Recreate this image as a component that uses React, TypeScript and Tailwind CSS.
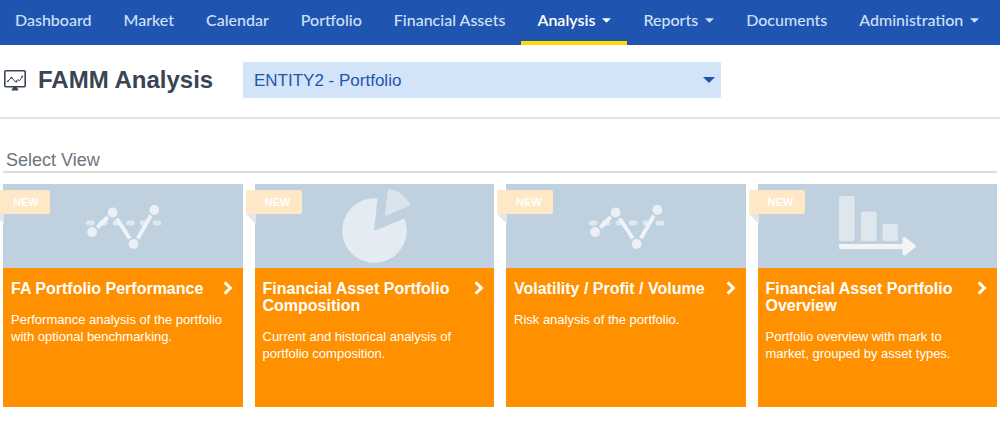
import React, { JSX } from "react";

type NavItem = {
  id: number;
  text: string;
  hasMenu?: boolean;
  active?: boolean;
};

type ViewItem = {
  id: number;
  title: string;
  description: string;
  icon: () => JSX.Element;
};

const navList: NavItem[] = [
  { id: 1, text: "Dashboard" },
  { id: 2, text: "Market" },
  { id: 3, text: "Calendar" },
  { id: 4, text: "Portfolio" },
  { id: 5, text: "Financial Assets" },
  { id: 6, text: "Analysis", hasMenu: true, active: true },
  { id: 7, text: "Reports", hasMenu: true },
  { id: 8, text: "Documents" },
  { id: 9, text: "Administration", hasMenu: true },
];

const CaretIcon = ({ className }: { className: string }) => (
  <svg viewBox="0 0 10 5" className={className} aria-hidden="true">
    <path d="M0 0h10L5 5z" fill="currentColor" />
  </svg>
);

const ChevronIcon = () => (
  <svg
    viewBox="0 0 10 14"
    className="mt-px h-3.5 w-2.5 shrink-0"
    fill="none"
    stroke="currentColor"
    strokeWidth="3"
    aria-hidden="true"
  >
    <path d="M1.6 1.4 7.4 7l-5.8 5.6" />
  </svg>
);

const MonitorIcon = () => (
  <svg
    viewBox="0 0 22 21"
    className="h-[21px] w-[22px] shrink-0"
    fill="none"
    stroke="currentColor"
    aria-hidden="true"
  >
    <rect x="0.8" y="0.8" width="20.4" height="16" rx="1" strokeWidth="1.6" />
    <path d="M3.5 11.5 7.5 7.5l4 4.5 2.4-2.4 1.6 1.2 3-4.6" strokeWidth="1" />
    <g fill="currentColor" stroke="none">
      <circle cx="3.8" cy="11.3" r="0.9" />
      <circle cx="7.5" cy="7.7" r="1" />
      <circle cx="12.4" cy="11.6" r="1" />
      <circle cx="18.3" cy="6.4" r="0.9" />
      <path d="M9 17h4v1.6h1.2v1.9H7.8v-1.9H9z" />
    </g>
  </svg>
);

const LineChartIcon = () => (
  <svg viewBox="0 0 80 84" className="h-[84px] w-20" aria-hidden="true">
    <g fill="#dfe8ef">
      {[2.8, 15.8, 29.8, 42.8, 56.8, 69.8].map((x) => (
        <rect key={x} x={x} y="36.5" width="8.5" height="5" rx="2" />
      ))}
    </g>
    <g stroke="#eff3f7" strokeWidth="4">
      <path d="M14.3 43.5 24.8 33" />
      <path d="M33.8 34.5 46.8 54.5" />
      <path d="M54.8 54.5 67.8 31.5" />
    </g>
    <g fill="#ebf0f6">
      <circle cx="9.1" cy="48" r="4.9" />
      <circle cx="29.6" cy="28.5" r="4.9" />
      <circle cx="50.6" cy="60" r="4.9" />
      <circle cx="71.3" cy="26" r="4.9" />
    </g>
  </svg>
);

const PieChartIcon = () => (
  <svg viewBox="0 0 80 84" className="h-[84px] w-20" aria-hidden="true">
    <path
      d="M43.5 14.4A32.3 32.3 0 1 0 70.5 34.6L40.1 47z"
      fill="#e4ebf2"
    />
    <path d="M54 4.9C63.3 5.5 71.5 11.5 76.5 21.3L50.9 32.2z" fill="#dae4ec" />
  </svg>
);

const BarChartIcon = () => (
  <svg viewBox="0 0 80 84" className="h-[84px] w-20" aria-hidden="true">
    <g fill="#dfe7ee">
      <rect x="2" y="12" width="15.5" height="45" rx="1.5" />
      <rect x="24" y="27.5" width="15.5" height="29.5" rx="1.5" />
      <rect x="45.5" y="40" width="15.5" height="17" rx="1.5" />
    </g>
    <path
      d="M2.8 60H65.5v-6.3l2.5-.7L78.5 61.2v2L68 71.5l-2.5-.7V65H2.8l-.8-.8v-3.4z"
      fill="#f1f5f8"
    />
  </svg>
);

const viewList: ViewItem[] = [
  {
    id: 1,
    title: "FA Portfolio Performance",
    description:
      "Performance analysis of the portfolio with optional benchmarking.",
    icon: LineChartIcon,
  },
  {
    id: 2,
    title: "Financial Asset Portfolio Composition",
    description: "Current and historical analysis of portfolio composition.",
    icon: PieChartIcon,
  },
  {
    id: 3,
    title: "Volatility / Profit / Volume",
    description: "Risk analysis of the portfolio.",
    icon: LineChartIcon,
  },
  {
    id: 4,
    title: "Financial Asset Portfolio Overview",
    description: "Portfolio overview with mark to market, grouped by asset types.",
    icon: BarChartIcon,
  },
];

const NavBar = () => (
  <nav className="flex bg-[#1f55b0] font-[Lato,sans-serif] text-base font-medium whitespace-nowrap">
    {navList.map((item) => (
      <a
        href="#"
        key={item.id}
        className={`flex h-[45px] items-center gap-[7px] border-b-4 px-4 pb-px first:pl-[15px] ${
          item.active
            ? "border-[#ffdd00] font-semibold text-white"
            : "border-transparent text-[#cfe0f8]"
        }`}
      >
        {item.text}
        {item.hasMenu && <CaretIcon className="h-[5px] w-[9px]" />}
      </a>
    ))}
  </nav>
);

const ViewCard = ({ item }: { item: ViewItem }) => (
  <a
    href="#"
    className="relative flex min-h-[223px] flex-col bg-[#ff9000] text-white"
  >
    <div className="flex justify-center bg-[#bfd0de]">
      <item.icon />
    </div>
    {/* ribbon */}
    <div className="absolute top-1.5 -left-[9px]">
      <span className="flex h-6 w-14 items-center rounded-xs bg-[#ffe8c6] pl-[19px] text-[11px] font-bold">
        NEW
      </span>
      <svg
        viewBox="0 0 10 10"
        className="size-2.5"
        fill="#e5e6e7"
        aria-hidden="true"
      >
        <path d="M0 0h10v10z" />
      </svg>
    </div>
    <div className="flex flex-col gap-3.5 px-2 pt-3">
      <div className="flex items-start justify-between pr-0.5">
        <h3 className="max-w-[200px] text-base leading-[17px] font-bold">
          {item.title}
        </h3>
        <ChevronIcon />
      </div>
      <p className="pr-1 text-[13px] leading-[17px]">{item.description}</p>
    </div>
  </a>
);

const App = () => {
  return (
    <div className="bg-white font-['Liberation_Sans',Arial,sans-serif]">
      <NavBar />
      <header className="flex items-center border-b-2 border-[#e3e3e3] pt-[17px] pb-[19px] pl-1 text-[#3a4554]">
        <MonitorIcon />
        <h1 className="w-[204px] pl-3 text-2xl font-bold whitespace-nowrap">
          FAMM Analysis
        </h1>
        <div className="ml-[13px] grid w-[48%] items-center text-[#1f55b0]">
          <select
            aria-label="Portfolio"
            className="col-start-1 row-start-1 h-9 appearance-none rounded-xs bg-[#d3e3f8] pt-px pr-8 pl-[11px] text-[17px]"
          >
            <option>ENTITY2 - Portfolio</option>
          </select>
          <CaretIcon className="pointer-events-none col-start-1 row-start-1 mr-1.5 h-1.5 w-3 justify-self-end" />
        </div>
      </header>
      <main className="overflow-hidden px-[3px] pt-[30px] pb-8">
        <h2 className="border-b-2 border-[#dcdcdc] pl-[3px] text-lg leading-[22px] text-[#6b757e]">
          Select View
        </h2>
        <div className="grid grid-cols-4 gap-3 pt-[11px]">
          {viewList.map((item) => (
            <ViewCard key={item.id} item={item} />
          ))}
        </div>
      </main>
    </div>
  );
};

export default App;
